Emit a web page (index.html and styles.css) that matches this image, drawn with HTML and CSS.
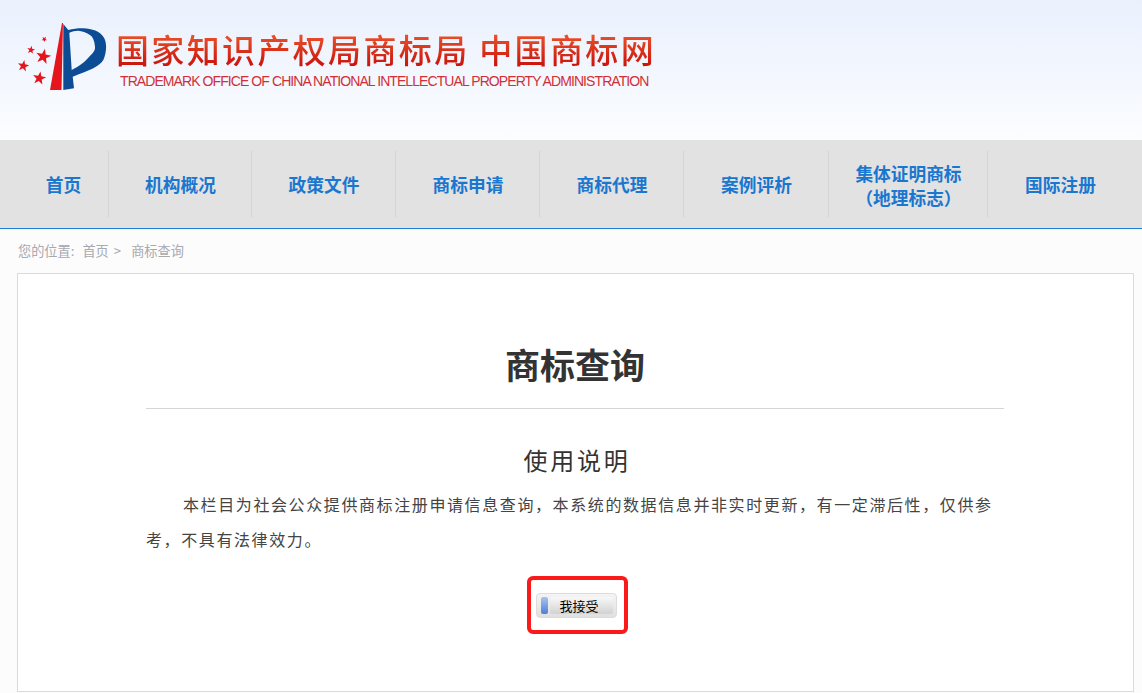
FILE: index.html
```html
<!DOCTYPE html>
<html lang="zh-CN">
<head>
<meta charset="utf-8">
<title>商标查询</title>
<link rel="stylesheet" href="styles.css">
</head>
<body>
<header class="masthead">
  <svg class="emblem" width="92" height="72" viewBox="0 0 92 72" aria-hidden="true">
    <defs>
      <polygon id="star" points="0,-1 .235,-.324 .951,-.309 .38,.124 .588,.809 0,.4 -.588,.809 -.38,.124 -.951,-.309 -.235,-.324"/>
    </defs>
    <polygon fill="#e5151d" points="46,0 47,0 45.5,67 34,67"/>
    <path fill="#0c4c94" fill-rule="evenodd" d="M47.3,1 L52.3,7 C57,5.8 62,5.2 67.3,5.3 C76,6 84,8 87.5,14 C91,19 91,29 87.3,37 C83,44 74,47 56.7,53.7 L58,65.3 L47.3,67 Z M53.3,9.7 L55.7,47 C63,43 68,40 73,34 C77,30 79.5,27 79,23.7 C78.5,18 77,14 74,12 C70,9 66,8 62.3,7.7 C59,7.7 56,8.6 53.3,9.7 Z"/>
    <g fill="#e5151d">
      <use href="#star" transform="translate(27.3,33.7) rotate(12) scale(8)"/>
      <use href="#star" transform="translate(23.3,55.3) rotate(10) scale(7)"/>
      <use href="#star" transform="translate(7.3,43) rotate(10) scale(6)"/>
      <use href="#star" transform="translate(15,27) rotate(10) scale(4.2)"/>
      <use href="#star" transform="translate(28.3,16.3) rotate(35) scale(3)"/>
    </g>
  </svg>
  <div class="brand">
    <div class="brand-cn">国家知识产权局商标局 中国商标网</div>
    <div class="brand-en">TRADEMARK OFFICE OF CHINA NATIONAL INTELLECTUAL PROPERTY ADMINISTRATION</div>
  </div>
</header>
<nav class="mainnav">
  <a class="nav-item w-home">首页</a>
  <a class="nav-item w-a">机构概况</a>
  <a class="nav-item w-b">政策文件</a>
  <a class="nav-item w-b">商标申请</a>
  <a class="nav-item w-b">商标代理</a>
  <a class="nav-item w-c">案例评析</a>
  <a class="nav-item w-d two-line">集体证明商标<br>（地理标志）</a>
  <a class="nav-item w-b last">国际注册</a>
</nav>
<div class="crumbs">
  <span>您的位置:</span><span class="crumb-home">首页</span><span>&gt;</span><span class="crumb-current">商标查询</span>
</div>
<main class="card">
  <h1 class="title">商标查询</h1>
  <h2 class="subtitle">使用说明</h2>
  <p class="notice">本栏目为社会公众提供商标注册申请信息查询，本系统的数据信息并非实时更新，有一定滞后性，仅供参考，不具有法律效力。</p>
  <div class="accept-row">
    <div class="highlight">
      <button class="accept" type="button"><span class="accept-tab"></span><span class="accept-label">我接受</span></button>
    </div>
  </div>
</main>
</body>
</html>
```
FILE: styles.css
```css
* { box-sizing: border-box; }
html, body { margin: 0; padding: 0; }
body {
  height: 693px;
  overflow: hidden;
  background: #fcfcfd;
  font-family: "Liberation Sans", "Noto Sans CJK SC", sans-serif;
  color: #333;
}
.masthead {
  height: 140px;
  background: linear-gradient(#eaf1fd 0%, #f2f6fe 50%, #fcfdff 100%);
  display: flex;
  align-items: flex-start;
  padding: 23px 0 0 16px;
}
.emblem { display: block; flex: none; }
.brand { margin-left: 8px; padding-top: 7px; }
.brand-cn {
  font-family: "Noto Sans CJK SC", sans-serif;
  font-size: 33px;
  line-height: 38px;
  font-weight: 500;
  letter-spacing: 2.35px;
  white-space: nowrap;
  background: linear-gradient(#ee5a2e, #c80f0a);
  -webkit-background-clip: text;
  background-clip: text;
  color: transparent;
}
.brand-en {
  margin: 5px 0 0 4px;
  font-size: 14px;
  line-height: 16px;
  letter-spacing: -0.92px;
  white-space: nowrap;
  color: #d22f35;
}
.mainnav {
  height: 89px;
  background: #e2e2e2;
  border-bottom: 1px solid #1a7fd4;
  display: flex;
  align-items: center;
  padding-left: 18px;
}
.nav-item {
  height: 66px;
  padding-left: 1px;
  display: flex;
  align-items: center;
  justify-content: center;
  text-align: center;
  border-right: 1px solid #d4d4d4;
  color: #1a77cf;
  font-family: "Noto Sans CJK SC", sans-serif;
  font-size: 17.7px;
  line-height: 24px;
  font-weight: 700;
}
.two-line { padding-top: 1px; }
.w-home { width: 91px; }
.w-a { width: 143px; }
.w-b { width: 144px; }
.w-c { width: 145px; }
.w-d { width: 159px; }
.last { border-right: 0; }
.crumbs {
  height: 44px;
  padding: 14px 0 0 18px;
  display: flex;
  font-family: "Noto Sans CJK SC", sans-serif;
  font-size: 13.2px;
  line-height: 15px;
  color: #a8a8ae;
}
.crumb-home { margin: 0 5px 0 8px; }
.crumb-current { margin-left: 10px; }
.card {
  margin: 0 8px 0 17px;
  height: 419px;
  background: #fff;
  border: 1px solid #d4dce8;
  padding: 0 129px 0 128px;
  font-family: "Noto Sans CJK SC", sans-serif;
}
.title {
  margin: 0;
  height: 135px;
  padding-top: 67px;
  border-bottom: 1px solid #d5d5d5;
  text-align: center;
  font-size: 35px;
  line-height: 46px;
  font-weight: 700;
  color: #333;
}
.subtitle {
  margin: 31px 0 0;
  padding-left: 4px;
  text-align: center;
  font-size: 24px;
  line-height: 40px;
  font-weight: 400;
  letter-spacing: 2.7px;
  color: #333;
}
.notice {
  margin: 7px 0 0;
  font-size: 16px;
  line-height: 35px;
  letter-spacing: 1.6px;
  text-indent: 37px;
  color: #444;
}
.accept-row {
  display: flex;
  justify-content: center;
  margin-top: 19px;
  padding-left: 4px;
}
.highlight {
  width: 101px;
  height: 58px;
  padding-left: 5px;
  border: 4px solid #fb1a1a;
  border-radius: 6px;
  display: flex;
  align-items: center;
  justify-content: flex-start;
}
.accept {
  width: 81px;
  height: 25px;
  padding: 3px 3px 3px 4px;
  display: flex;
  align-items: stretch;
  gap: 2px;
  border: 1px solid #dcdcdc;
  border-radius: 4px;
  background: linear-gradient(#f4f4f4, #e0e0e0);
  font-family: "Noto Sans CJK SC", sans-serif;
}
.accept-tab {
  width: 7px;
  flex: none;
  border-radius: 2px;
  background: linear-gradient(#a9c3ee, #4f7fd8);
}
.accept-label {
  flex: 1;
  padding-right: 4px;
  border-radius: 2px;
  background: linear-gradient(#f8f8f8, #d2d2d2);
  font-size: 13px;
  line-height: 17px;
  text-align: center;
  color: #000;
}
```
